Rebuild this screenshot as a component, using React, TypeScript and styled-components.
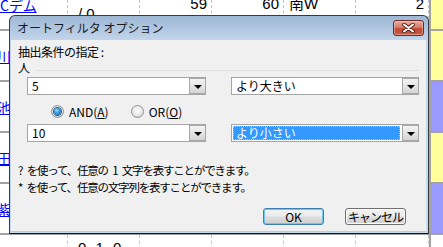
import styled, { createGlobalStyle } from 'styled-components'

const GlobalStyle = createGlobalStyle`
  html, body {
    margin: 0;
    padding: 0;
    background: #ffffff;
  }
`

const Screen = styled.div`
  position: relative;
  width: 443px;
  height: 247px;
  overflow: hidden;
  background: #ffffff;
  font-family: "Liberation Sans", "Noto Sans CJK JP", sans-serif;
`

/* ---------- spreadsheet behind the dialog ---------- */

const Sheet = styled.div`
  display: flex;
  flex-direction: column;
`

const Row = styled.div<{ $h: number; $last?: boolean }>`
  display: flex;
  height: ${p => p.$h}px;
  box-sizing: border-box;
  border-bottom: ${p => (p.$last ? 'none' : '2px solid #a3a3a3')};
`

const Cell = styled.div<{ $w: number; $align?: string; $valign?: string }>`
  width: ${p => p.$w}px;
  flex: none;
  box-sizing: border-box;
  display: flex;
  justify-content: ${p => p.$align || 'flex-start'};
  align-items: ${p => p.$valign || 'flex-start'};
  border-right: 1px dashed #c4c4c4;
  padding: 0 4px 0 6px;
  overflow: hidden;
  white-space: pre;
`

const SideCell = styled.div<{ $bg: string }>`
  flex: 1;
  background: ${p => p.$bg};
  border-left: 2px solid #a3a3a3;
`

const SheetText = styled.span<{ $dy: number; $dx?: number }>`
  display: block;
  margin-top: ${p => p.$dy}px;
  margin-left: ${p => p.$dx || 0}px;
  font-size: 15px;
  line-height: 15px;
  color: #000000;
  white-space: pre;
`

const SheetLink = styled.span<{ $dy?: number; $dx: number }>`
  display: block;
  margin-top: ${p => p.$dy || 0}px;
  margin-left: ${p => p.$dx}px;
  font-family: "Noto Sans CJK JP", sans-serif;
  font-size: 14px;
  line-height: 14px;
  color: #0000ff;
  text-decoration: underline;
`

/* ---------- dialog window ---------- */

const Window = styled.div`
  position: absolute;
  left: 9px;
  top: 15px;
  width: 420px;
  height: 219px;
  box-sizing: border-box;
  border: 1px solid #3a3a3a;
  border-bottom-color: #111111;
  border-radius: 6px 6px 0 0;
  background: linear-gradient(#9eb7d5 0px, #c4d7ec 26px, #c8dcef 100%);
  padding: 0 2px 1px 1px;
  display: flex;
  flex-direction: column;
  font-family: "Noto Sans CJK JP", sans-serif;
  color: #000000;
`

const TitleBar = styled.div`
  height: 24px;
  flex: none;
  display: flex;
  align-items: flex-start;
  justify-content: space-between;
  padding-left: 6px;
`

const Title = styled.span`
  margin-top: 4px;
  font-size: 12px;
  line-height: 16px;
  color: #1a1a1a;
`

const CloseButton = styled.div`
  margin-top: 4px;
  margin-right: 2px;
  width: 31px;
  height: 16px;
  box-sizing: border-box;
  border: 1px solid #6b2a22;
  border-radius: 3px;
  background: linear-gradient(#e7ab9f 0%, #d57d6b 45%, #c24a34 55%, #c75a40 100%);
  display: flex;
  align-items: center;
  justify-content: center;
  box-shadow: inset 0 0 0 1px rgba(255, 220, 210, 0.45);
`

const Client = styled.div`
  flex: 1;
  background: #f0f0f0;
  border-bottom: 1px solid #9fd5ee;
  display: flex;
  flex-direction: column;
  padding: 0 7px 0 7px;
  font-size: 12px;
`

const Label = styled.div`
  margin-top: 4px;
  line-height: 16px;
  letter-spacing: -0.5px;
`

const Group = styled.div`
  display: flex;
  align-items: center;
  height: 16px;
  line-height: 16px;
`

const GroupLine = styled.div`
  flex: 1;
  margin-left: 6px;
  margin-top: 4px;
  border-top: 1px solid #d5dfe5;
`

const ComboRow = styled.div<{ $top: number }>`
  display: flex;
  gap: 25px;
  margin-top: ${p => p.$top}px;
  padding-left: 9px;
`

const Combo = styled.div<{ $w: number }>`
  width: ${p => p.$w}px;
  height: 18px;
  box-sizing: border-box;
  border: 1px solid #a5a5a5;
  background: #ffffff;
  display: flex;
  align-items: stretch;
`

const ComboText = styled.div<{ $selected?: boolean }>`
  flex: 1;
  margin: 1px 2px 1px 1px;
  padding-left: 3px;
  display: flex;
  align-items: center;
  font-size: 12px;
  line-height: 14px;
  background: ${p => (p.$selected ? '#3399ff' : 'transparent')};
  color: ${p => (p.$selected ? '#ffffff' : '#000000')};
  outline: ${p => (p.$selected ? '1px dotted #f5b070' : 'none')};
  outline-offset: -1px;
`

const DropButton = styled.div`
  width: 16px;
  margin: 0;
  box-sizing: border-box;
  border: 1px solid #a8a8a8;
  border-right: none;
  background: linear-gradient(#f4f4f4, #e4e4e4 50%, #d4d4d4);
  display: flex;
  align-items: center;
  justify-content: center;
  &::after {
    content: '';
    width: 0;
    height: 0;
    border-left: 4px solid transparent;
    border-right: 4px solid transparent;
    border-top: 4px solid #000000;
    margin-top: 1px;
  }
`

const RadioRow = styled.div`
  display: flex;
  align-items: center;
  margin-top: 10px;
  padding-left: 33px;
  height: 13px;
`

const RadioItem = styled.label<{ $gap?: number }>`
  display: flex;
  align-items: center;
  gap: 5px;
  margin-right: ${p => p.$gap || 0}px;
  font-size: 12px;
  line-height: 13px;
`

const RadioCircle = styled.span<{ $checked?: boolean }>`
  width: 13px;
  height: 13px;
  box-sizing: border-box;
  border-radius: 50%;
  border: 1px solid #8e8f8f;
  background: radial-gradient(circle at 50% 40%, #ffffff 0%, #e8e8e8 55%, #cfcfcf 100%);
  display: flex;
  align-items: center;
  justify-content: center;
  &::after {
    content: '';
    display: ${p => (p.$checked ? 'block' : 'none')};
    width: 7px;
    height: 7px;
    border-radius: 50%;
    background: radial-gradient(circle at 40% 35%, #8ad6ff 0%, #2a8ad4 55%, #0f5a9c 100%);
    box-shadow: 0 0 0 1px #1b5f95;
  }
`

const HintBlock = styled.div`
  margin-top: 20px;
  font-size: 11.5px;
  line-height: 17px;
  letter-spacing: -1.2px;
  word-spacing: 3px;
`

const ButtonRow = styled.div`
  display: flex;
  justify-content: flex-end;
  gap: 21px;
  margin-top: 12px;
  padding-right: 13px;
`

const Button = styled.div<{ $default?: boolean }>`
  width: 61px;
  height: 17px;
  box-sizing: border-box;
  border: 1px solid ${p => (p.$default ? '#3c7fb1' : '#707070')};
  border-radius: 3px;
  background: linear-gradient(#f2f2f2 0%, #ebebeb 48%, #dddddd 52%, #cfcfcf 100%);
  box-shadow: inset 0 0 0 1px ${p => (p.$default ? '#6ec6ee' : '#fbfbfb')};
  display: flex;
  align-items: center;
  justify-content: center;
  font-size: 12px;
  line-height: 14px;
  letter-spacing: ${p => (p.$default ? '0' : '-1px')};
`

const cols = [68, 72, 72, 72, 72, 73]

export default function App() {
  return (
    <Screen>
      <GlobalStyle />
      <Sheet>
        <Row $h={31}>
          <Cell $w={cols[0]} style={{ paddingLeft: 0 }}>
            <SheetLink $dy={-2} $dx={0}>Cデム</SheetLink>
          </Cell>
          <Cell $w={cols[1]} style={{ paddingLeft: 10 }}>
            <SheetText $dy={6}>/ 0</SheetText>
          </Cell>
          <Cell $w={cols[2]} $align="flex-end">
            <SheetText $dy={-4}>59</SheetText>
          </Cell>
          <Cell $w={cols[3]} $align="flex-end">
            <SheetText $dy={-4}>60</SheetText>
          </Cell>
          <Cell $w={cols[4]}>
            <SheetText $dy={-4} $dx={-1}>南W</SheetText>
          </Cell>
          <Cell $w={cols[5]} $align="flex-end">
            <SheetText $dy={-4}>2</SheetText>
          </Cell>
          <SideCell $bg="#ffff99" />
        </Row>
        {[
          { name: '小川', bg: '#ffff99' },
          { name: '小池', bg: '#9999ff' },
          { name: '前田', bg: '#ffff99' },
          { name: '村紫', bg: '#9999ff' },
        ].map(r => (
          <Row $h={51} key={r.name}>
            <Cell $w={cols[0]} $valign="center" style={{ paddingLeft: 0 }}>
              <SheetLink $dx={-17}>{r.name}</SheetLink>
            </Cell>
            {cols.slice(1).map((w, i) => (
              <Cell $w={w} key={i} />
            ))}
            <SideCell $bg={r.bg} />
          </Row>
        ))}
        <Row $h={20} $last>
          <Cell $w={cols[0]} />
          <Cell $w={cols[1]} style={{ paddingLeft: 10 }}>
            <SheetText $dy={5}>0- 1- 0</SheetText>
          </Cell>
          {cols.slice(2).map((w, i) => (
            <Cell $w={w} key={i} />
          ))}
          <SideCell $bg="#ffffff" />
        </Row>
      </Sheet>

      <Window>
        <TitleBar>
          <Title>オートフィルタ オプション</Title>
          <CloseButton>
            <svg width="13" height="10" viewBox="0 0 13 10">
              <path d="M2 1.5 L11 8.5 M11 1.5 L2 8.5" stroke="#4a1a14" strokeWidth="3.6" strokeLinecap="round" />
              <path d="M2 1.5 L11 8.5 M11 1.5 L2 8.5" stroke="#ffffff" strokeWidth="2" strokeLinecap="round" />
            </svg>
          </CloseButton>
        </TitleBar>
        <Client>
          <Label>抽出条件の指定 :</Label>
          <Group>
            人
            <GroupLine />
          </Group>
          <ComboRow $top={1}>
            <Combo $w={179}>
              <ComboText>5</ComboText>
              <DropButton />
            </Combo>
            <Combo $w={188}>
              <ComboText>より大きい</ComboText>
              <DropButton />
            </Combo>
          </ComboRow>
          <RadioRow>
            <RadioItem $gap={22}>
              <RadioCircle $checked />
              <span>AND(<u>A</u>)</span>
            </RadioItem>
            <RadioItem>
              <RadioCircle />
              <span>OR(<u>O</u>)</span>
            </RadioItem>
          </RadioRow>
          <ComboRow $top={6}>
            <Combo $w={179}>
              <ComboText>10</ComboText>
              <DropButton />
            </Combo>
            <Combo $w={188}>
              <ComboText $selected>より小さい</ComboText>
              <DropButton />
            </Combo>
          </ComboRow>
          <HintBlock>
            <div>? を使って、任意の 1 文字を表すことができます。</div>
            <div>* を使って、任意の文字列を表すことができます。</div>
          </HintBlock>
          <ButtonRow>
            <Button $default>OK</Button>
            <Button>キャンセル</Button>
          </ButtonRow>
        </Client>
      </Window>
    </Screen>
  )
}
